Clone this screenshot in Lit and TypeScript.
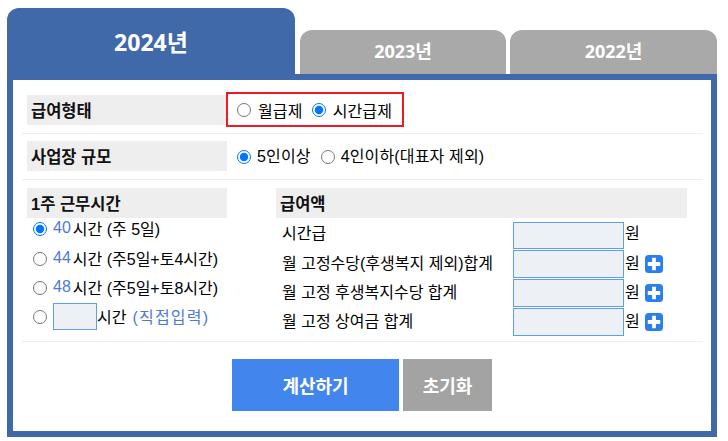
import { LitElement, html, css } from 'lit';
import { customElement } from 'lit/decorators.js';

const hours = [
  { num: '40', rest: '시간 (주 5일)', checked: true },
  { num: '44', rest: '시간 (주5일+토4시간)', checked: false },
  { num: '48', rest: '시간 (주5일+토8시간)', checked: false },
];

const pays = [
  { label: '시간급', plus: false },
  { label: '월 고정수당(후생복지 제외)합계', plus: true },
  { label: '월 고정 후생복지수당 합계', plus: true },
  { label: '월 고정 상여금 합계', plus: true },
];

@customElement('app-root')
export class AppRoot extends LitElement {
  static styles = css`
    :host {
      display: block;
      box-sizing: border-box;
      width: 728px;
      height: 441px;
      padding: 8px 11px 0 7px;
      background: #fff;
      color: #000;
      font-family: 'Liberation Sans', 'Noto Sans CJK KR', sans-serif;
      font-size: 16px;
    }
    * {
      box-sizing: border-box;
    }
    .tabs {
      display: flex;
      align-items: flex-end;
      height: 66px;
    }
    .tab {
      display: flex;
      align-items: center;
      justify-content: center;
      width: 206px;
      height: 44px;
      margin-left: 5px;
      padding-bottom: 5px;
      border-radius: 12px 12px 0 0;
      background: #a9a9a9;
      color: #fff;
      font-family: 'Noto Sans', 'Noto Sans CJK KR', sans-serif;
      font-size: 18px;
      font-weight: 700;
    }
    .tab.last {
      width: 207px;
      margin-left: 4px;
    }
    .tab.active {
      width: 288px;
      height: 66px;
      margin-left: 0;
      padding-bottom: 1px;
      background: #3f69a8;
      font-size: 23px;
    }
    .panel {
      height: 363px;
      padding: 14px 8px 0 9px;
      border: 6px solid #3f69a8;
    }
    .row {
      display: flex;
      align-items: center;
      padding-left: 5px;
      border-bottom: 1px solid #eee;
    }
    .row.first {
      height: 40px;
      padding-bottom: 8px;
      margin-bottom: 7px;
    }
    .row.second {
      height: 39px;
      padding-bottom: 8px;
      margin-bottom: 8px;
    }
    .label {
      display: flex;
      align-items: center;
      height: 30px;
      padding-left: 4px;
      background: #eee;
      font-size: 16.5px;
      font-weight: 700;
      color: #111;
    }
    .row .label {
      width: 200px;
      flex: none;
    }
    .choices {
      display: flex;
      align-items: center;
      padding-left: 10px;
      letter-spacing: 0.15px;
      white-space: nowrap;
    }
    .choices.boxed {
      width: 178px;
      height: 35px;
      margin-left: -1px;
      padding-left: 9px;
      border: 2px solid #ed1c24;
    }
    .choices label {
      flex: none;
      margin-right: 10px;
    }
    .choices.boxed label {
      margin-right: 9px;
    }
    .choices.plain label {
      padding-bottom: 3px;
    }
    .choices.plain input[type='radio'] {
      margin: 5px 6px 0 0;
    }
    input[type='radio'] {
      flex: none;
      width: 14px;
      height: 14px;
      margin: 0 7px 0 0;
    }
    label {
      display: flex;
      align-items: center;
    }
    .columns {
      display: grid;
      grid-template-columns: 200px 411px;
      column-gap: 49px;
      height: 154px;
      padding-left: 5px;
      border-bottom: 1px solid #eee;
    }
    .hours label {
      height: 29px;
      padding: 0 0 2px 6px;
      white-space: nowrap;
    }
    .hours label:first-of-type {
      height: 22px;
      margin-bottom: 4px;
    }
    .hours input {
      margin-top: 2px;
    }
    .hours input[type='radio'] {
      margin: 2px 6px 0 0;
    }
    .blue {
      margin-right: 2px;
      color: #4f78d8;
    }
    .field {
      width: 44px;
      height: 27px;
      padding: 0;
      border: 1px solid #5b9fee;
      background: #edf0f5;
    }
    .direct {
      margin: 0 0 0 6px;
      letter-spacing: 1.2px;
    }
    .pay {
      display: flex;
      align-items: center;
      height: 29px;
      padding: 0 0 5px 6px;
    }
    .pay.top {
      height: 28px;
      margin-top: 4px;
      padding-bottom: 8px;
    }
    .pay .name {
      width: 231px;
      flex: none;
    }
    .pay .field {
      align-self: flex-start;
      width: 111px;
      height: 28px;
      flex: none;
      margin-right: 1px;
    }
    .pay.top .field {
      height: 27px;
    }
    .plus {
      display: block;
      width: 18px;
      height: 18px;
      margin: 3px 0 0 5px;
    }
    .actions {
      display: flex;
      gap: 4px;
      padding: 17px 0 0 210px;
    }
    .btn {
      height: 52px;
      border: 0;
      color: #fff;
      font-family: inherit;
      font-size: 18px;
      font-weight: 700;
    }
    .calc {
      width: 167px;
      background: #4285ec;
    }
    .reset {
      width: 89px;
      background: #a3a3a3;
    }
  `;

  plusIcon() {
    return html`<svg class="plus" viewBox="0 0 18 18">
      <rect width="18" height="18" rx="3.5" fill="#2a7fec"></rect>
      <path d="M9 2.8v12.4M2.8 9h12.4" stroke="#fff" stroke-width="3.8" fill="none"></path>
    </svg>`;
  }

  render() {
    return html`
      <div class="tabs">
        <div class="tab active">2024년</div>
        <div class="tab">2023년</div>
        <div class="tab last">2022년</div>
      </div>
      <div class="panel">
        <div class="row first">
          <div class="label">급여형태</div>
          <div class="choices boxed">
            <label><input type="radio" name="kind" />월급제</label>
            <label><input type="radio" name="kind" checked />시간급제</label>
          </div>
        </div>
        <div class="row second">
          <div class="label">사업장 규모</div>
          <div class="choices plain">
            <label><input type="radio" name="size" checked />5인이상</label>
            <label><input type="radio" name="size" />4인이하(대표자 제외)</label>
          </div>
        </div>
        <div class="columns">
          <div class="hours">
            <div class="label">1주 근무시간</div>
            ${hours.map(
              (h) => html`<label>
                <input type="radio" name="hours" ?checked=${h.checked} />
                <span class="blue">${h.num}</span>${h.rest}
              </label>`,
            )}
            <label>
              <input type="radio" name="hours" />
              <input class="field" type="text" />시간
              <span class="blue direct">(직접입력)</span>
            </label>
          </div>
          <div>
            <div class="label">급여액</div>
            ${pays.map(
              (p, i) => html`<div class="pay ${i === 0 ? 'top' : ''}">
                <span class="name">${p.label}</span>
                <input class="field" type="text" />원
                ${p.plus ? this.plusIcon() : ''}
              </div>`,
            )}
          </div>
        </div>
        <div class="actions">
          <button class="btn calc">계산하기</button>
          <button class="btn reset">초기화</button>
        </div>
      </div>
    `;
  }
}
